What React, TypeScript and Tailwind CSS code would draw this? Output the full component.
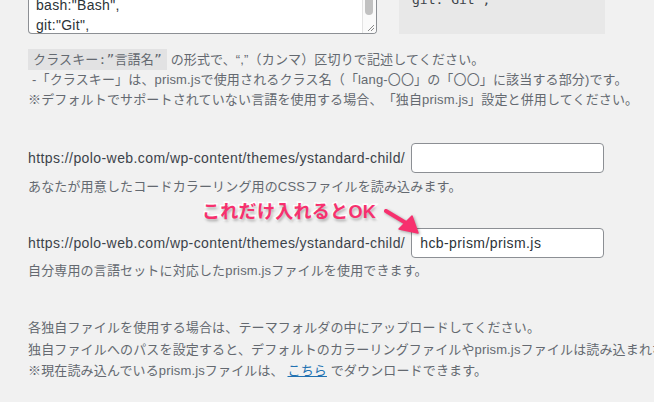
const sans = 'font-["Liberation_Sans","Noto_Sans_CJK_JP",sans-serif]'

function FakeTextarea() {
  return (
    <div className="relative w-[349px] h-[34px] shrink-0 overflow-hidden rounded-b-[4px] border border-t-0 border-[#8c8f94] bg-white">
      {/* last visible lines of the textarea */}
      <div className="absolute left-[7px] bottom-[-2px] text-[14px] leading-[20px] tracking-[0.3px] text-[#2c3338]">
        <div>bash:"Bash",</div>
        <div>git:"Git",</div>
      </div>
      {/* scrollbar */}
      <div className="absolute right-0 top-0 bottom-0 w-[14px] border-l border-[#e3e3e3] bg-[#fafafa]">
        <div className="absolute left-[2px] top-0 h-[15px] w-[8px] rounded-b-full bg-[#c1c1c1]" />
      </div>
      {/* resize grip */}
      <svg className="absolute right-[1px] bottom-[1px]" width="10" height="10" viewBox="0 0 10 10">
        <path d="M9 3 L3 9 M9 6 L6 9" stroke="#8a8a8a" strokeWidth="1" />
      </svg>
    </div>
  )
}

function PathInput({ value }: { value?: string }) {
  return (
    <div className="flex items-center gap-[6px]">
      <span className="text-[14px] tracking-[0.42px] text-[#3c434a] whitespace-nowrap">
        https://polo-web.com/wp-content/themes/ystandard-child/
      </span>
      <div className="w-[193px] h-[30px] rounded-[4px] border border-[#8c8f94] bg-white px-[8px] flex items-center text-[14px] tracking-[0.42px] text-[#2c3338]">
        {value}
      </div>
    </div>
  )
}

export default function App() {
  return (
    <div className={`relative w-[654px] h-[402px] overflow-hidden bg-[#f1f1f1] pl-[28px] [text-spacing-trim:space-all] ${sans}`}>
      {/* textarea + preview box */}
      <div className="flex items-start">
        <FakeTextarea />
        <div className='ml-[22px] w-[206px] h-[34px] shrink-0 overflow-hidden bg-[#e8e8e8] pl-[13px] font-["DejaVu_Sans_Mono",monospace] text-[13px] leading-[20px] text-[#3c434a]'>
          <div className="-mt-[10px]">git:"Git",</div>
        </div>
      </div>

      {/* format notes */}
      <div className="mt-[16px] text-[13px] leading-[20px] tracking-[0.15px] text-[#646970] whitespace-nowrap">
        <p>
          <span className='bg-[#e2e2e3] px-[5px] py-[3px] font-["DejaVu_Sans_Mono","Noto_Sans_CJK_JP",monospace]'>
            クラスキー:”言語名”
          </span>
          {' '}の形式で、“,”（カンマ）区切りで記述してください。
        </p>
        <p className="pl-[4px]">-「クラスキー」は、prism.jsで使用されるクラス名（「lang-〇〇」の「〇〇」に該当する部分)です。</p>
        <p>※デフォルトでサポートされていない言語を使用する場合、「独自prism.js」設定と併用してください。</p>
      </div>

      {/* css file */}
      <div className="mt-[33px]">
        <PathInput />
      </div>
      <p className="mt-[4px] text-[13px] leading-[20px] tracking-[0.15px] text-[#646970]">
        あなたが用意したコードカラーリング用のCSSファイルを読み込みます。
      </p>

      {/* prism.js file */}
      <div className="mt-[31px]">
        <PathInput value="hcb-prism/prism.js" />
      </div>
      <p className="mt-[3px] text-[13px] leading-[20px] tracking-[0.15px] text-[#646970]">
        自分専用の言語セットに対応したprism.jsファイルを使用できます。
      </p>

      {/* notes */}
      <div className="mt-[36px] text-[13px] leading-[21.5px] tracking-[0.15px] text-[#646970] whitespace-nowrap">
        <p>各独自ファイルを使用する場合は、テーマフォルダの中にアップロードしてください。</p>
        <p>独自ファイルへのパスを設定すると、デフォルトのカラーリングファイルやprism.jsファイルは読み込まれなくなります。</p>
        <p>
          ※現在読み込んでいるprism.jsファイルは、{' '}
          <a className="text-[#2271b1] underline">こちら</a> でダウンロードできます。
        </p>
      </div>

      {/* annotation */}
      <div className="absolute left-[202px] top-[201px] text-[18px] leading-[22px] tracking-[0.3px] font-bold text-[#f7306e] whitespace-nowrap [-webkit-text-stroke:3px_#fff] [paint-order:stroke_fill] [text-shadow:1px_2px_3px_rgba(0,0,0,0.35)]">
        これだけ入れるとOK
      </div>
      <svg
        className="absolute left-[380px] top-[199px] [filter:drop-shadow(1px_1px_1.5px_rgba(0,0,0,0.35))]"
        width="50"
        height="40"
        viewBox="0 0 50 40"
      >
        <path d="M6 12 L26 24" stroke="#f7306e" strokeWidth="4" strokeLinecap="round" />
        <path d="M19 30 L32 17 L38 34 Z" fill="#f7306e" stroke="#f7306e" strokeWidth="1.5" strokeLinejoin="round" />
      </svg>
    </div>
  )
}
